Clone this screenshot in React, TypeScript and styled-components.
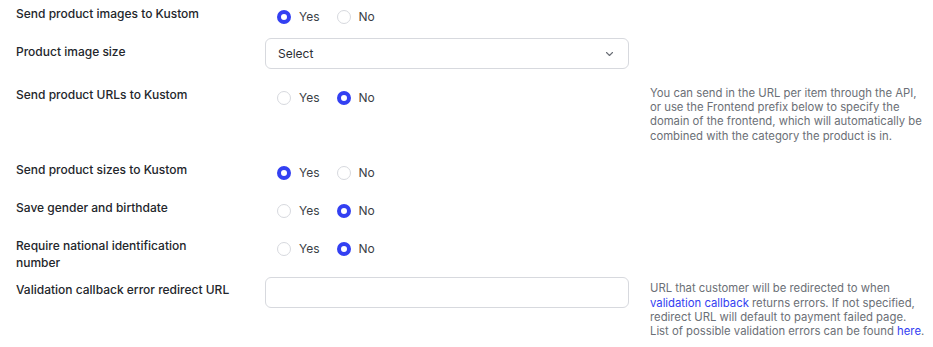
import React from "react";
import styled, { createGlobalStyle } from "styled-components";

const GlobalStyle = createGlobalStyle`
  * { box-sizing: border-box; }
  body {
    margin: 0;
    background: #ffffff;
    font-family: Inter, "Noto Sans", sans-serif;
    color: #1f2328;
  }
`;

const accent = "#3340f2";
const border = "#d7d9de";

const Page = styled.div`
  display: flex;
  flex-direction: column;
  padding: 0 8px 0 16px;
`;

const Row = styled.div<{ $space?: number }>`
  display: grid;
  grid-template-columns: 249px 364px 1fr;
  align-items: start;
  margin-bottom: ${(p) => p.$space ?? 6}px;
`;

const Label = styled.div`
  padding: 4.5px 34px 0 0;
  font-size: 12px;
  line-height: 17px;
  font-weight: 500;
  color: #23262b;
`;

const RadioGroup = styled.div`
  display: flex;
  align-items: center;
  gap: 17px;
  height: 32px;
  padding: 1px 0 0 12px;
`;

const Option = styled.label`
  display: flex;
  align-items: center;
  gap: 8px;
  font-size: 12px;
  color: #3a3e45;
`;

const Dot = styled.span<{ $on: boolean }>`
  width: 14px;
  height: 14px;
  border-radius: 50%;
  background: #fff;
  border: ${(p) => (p.$on ? `4.5px solid ${accent}` : `1px solid ${border}`)};
`;

const Field = styled.div`
  display: flex;
  align-items: center;
  justify-content: space-between;
  height: 31px;
  padding: 0 14px 0 12px;
  border: 1px solid ${border};
  border-radius: 6px;
  background: #fff;
  font-size: 12px;
  color: #2b2e33;
`;

const Help = styled.div<{ $bottom?: number }>`
  padding: 4.5px 0 ${(p) => p.$bottom ?? 0}px 21px;
  font-size: 11.3px;
  line-height: 14.4px;
  color: #6b6f76;
`;

const Link = styled.a`
  color: ${accent};
  text-decoration: none;
`;

const Chevron = () => (
  <svg width="9" height="6" viewBox="0 0 9 6" fill="none">
    <path d="M1.5 1.5 4.5 4.5 7.5 1.5" stroke="#6b6f76" strokeWidth="1.1" strokeLinecap="round" strokeLinejoin="round" />
  </svg>
);

const YesNo = ({ value }: { value: boolean }) => (
  <RadioGroup>
    <Option>
      <Dot $on={value} />
      Yes
    </Option>
    <Option>
      <Dot $on={!value} />
      No
    </Option>
  </RadioGroup>
);

export default function App() {
  return (
    <>
      <GlobalStyle />
      <Page>
        <Row>
          <Label>Send product images to Kustom</Label>
          <YesNo value={true} />
        </Row>
        <Row $space={12}>
          <Label>Product image size</Label>
          <Field>
            Select
            <Chevron />
          </Field>
        </Row>
        <Row $space={0}>
          <Label>Send product URLs to Kustom</Label>
          <YesNo value={false} />
          <Help $bottom={13}>
            You can send in the URL per item through the API, or use the Frontend prefix below to specify the
            domain of the frontend, which will automatically be combined with the category the product is in.
          </Help>
        </Row>
        <Row>
          <Label>Send product sizes to Kustom</Label>
          <YesNo value={true} />
        </Row>
        <Row>
          <Label>Save gender and birthdate</Label>
          <YesNo value={false} />
        </Row>
        <Row>
          <Label>Require national identification number</Label>
          <YesNo value={false} />
        </Row>
        <Row>
          <Label>Validation callback error redirect URL</Label>
          <Field />
          <Help>
            URL that customer will be redirected to when <Link>validation callback</Link> returns errors. If not
            specified, redirect URL will default to payment failed page. List of possible validation errors can be
            found <Link>here</Link>.
          </Help>
        </Row>
      </Page>
    </>
  );
}
